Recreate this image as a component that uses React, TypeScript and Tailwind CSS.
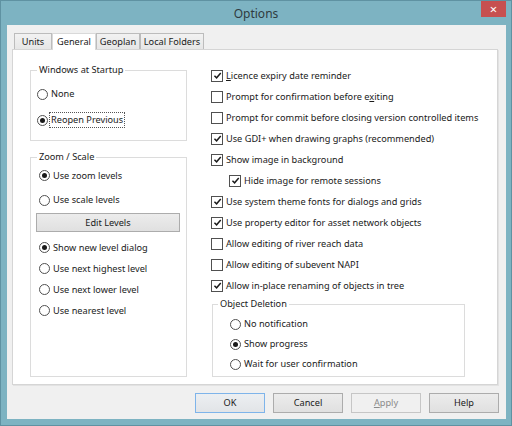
import React from 'react'

function Check({ checked }: { checked?: boolean }) {
  return (
    <span className="w-[12px] h-[12px] border border-[#505050] bg-white flex items-center justify-center shrink-0">
      {checked && (
        <svg viewBox="0 0 10 10" className="w-[9px] h-[9px]">
          <path d="M1.6 5.2 L4 7.6 L8.6 2.2" fill="none" stroke="#1a1a1a" strokeWidth="1.6" />
        </svg>
      )}
    </span>
  )
}

function Radio({ checked }: { checked?: boolean }) {
  return (
    <span className="w-[11px] h-[11px] rounded-full border border-[#505050] bg-white flex items-center justify-center shrink-0">
      {checked && <span className="w-[5px] h-[5px] rounded-full bg-[#1a1a1a]" />}
    </span>
  )
}

function CheckRow({ checked, indent, children }: { checked?: boolean; indent?: boolean; children: React.ReactNode }) {
  return (
    <div className={`h-[21px] flex items-center gap-[3px] ${indent ? 'pl-[18px]' : ''}`}>
      <Check checked={checked} />
      <span className="whitespace-nowrap">{children}</span>
    </div>
  )
}

function RadioRow({ checked, h, focus, children }: { checked?: boolean; h: string; focus?: boolean; children: React.ReactNode }) {
  return (
    <div className={`${h} flex items-center gap-[2px]`}>
      <Radio checked={checked} />
      <span className={`whitespace-nowrap px-[1px] ${focus ? 'outline outline-1 outline-dotted outline-[#555]' : ''}`}>{children}</span>
    </div>
  )
}

export default function App() {
  const tabs = [
    { label: 'Units', w: 'w-[38px]' },
    { label: 'General', w: 'w-[44px]', active: true },
    { label: 'Geoplan', w: 'w-[44px]' },
    { label: 'Local Folders', w: 'w-[64px]' },
  ]

  return (
    <div className="w-[512px] h-[426px] bg-[#7db3c2] border border-[#5f92a2] flex flex-col font-['Noto_Sans',sans-serif] text-[9.2px] text-[#1a1a1a] overflow-hidden">
      {/* Title bar */}
      <div className="h-[24px] flex items-start shrink-0">
        <div className="w-[30px]" />
        <div className="flex-1 text-center text-[12px] text-[#2f3b40] pt-[4px]">Options</div>
        <button className="w-[25px] h-[16px] bg-[#c75050] text-white flex items-center justify-center text-[13px] leading-none mr-[5px]">
          ×
        </button>
      </div>

      {/* Client area */}
      <div className="ml-[6px] mr-[5px] h-[394px] bg-[#f0f0f0] flex flex-col pt-[7px]">
        {/* Tabs */}
        <div className="flex items-end ml-[7px] h-[17px]">
          {tabs.map(t =>
            t.active ? (
              <div
                key={t.label}
                className={`${t.w} h-[17px] bg-white border border-b-0 border-[#d9d9d9] flex items-center justify-center relative z-10 -mb-px pb-[1px]`}
              >
                {t.label}
              </div>
            ) : (
              <div
                key={t.label}
                className={`${t.w} h-[16px] bg-gradient-to-b from-[#f2f2f2] to-[#e6e6e6] border border-b-0 border-[#bcbcbc] flex items-center justify-center`}
              >
                {t.label}
              </div>
            )
          )}
        </div>

        {/* Tab page */}
        <div className="ml-[5px] w-[486px] h-[336px] bg-white border border-[#d5d5d5] shadow-[1px_1px_0_#e2e2e2] flex items-start">
          {/* Left column */}
          <div className="ml-[17px] mt-[13px] w-[157px] flex flex-col">
            <fieldset className="border border-[#dcdcdc] h-[78px] px-[6px]">
              <legend className="px-[2px] leading-[14px]">Windows at Startup</legend>
              <div className="pt-[4px]">
                <RadioRow h="h-[26px]">None</RadioRow>
                <RadioRow h="h-[26px]" checked focus>Reopen Previous</RadioRow>
              </div>
            </fieldset>

            <fieldset className="mt-[9px] border border-[#dcdcdc] h-[227px] px-[5px]">
              <legend className="ml-[1px] px-[2px] leading-[14px]">Zoom / Scale</legend>
              <div className="pl-[3px]">
                <RadioRow h="h-[23px]" checked>Use zoom levels</RadioRow>
                <RadioRow h="h-[26px]">Use scale levels</RadioRow>
              </div>
              <button className="w-[144px] h-[19px] bg-gradient-to-b from-[#ececec] to-[#e0e0e0] border border-[#acacac] flex items-center justify-center">
                Edit Levels
              </button>
              <div className="pl-[3px] mt-[5px]">
                <RadioRow h="h-[21px]" checked>Show new level dialog</RadioRow>
                <RadioRow h="h-[21px]">Use next highest level</RadioRow>
                <RadioRow h="h-[21px]">Use next lower level</RadioRow>
                <RadioRow h="h-[21px]">Use nearest level</RadioRow>
              </div>
            </fieldset>
          </div>

          {/* Right column */}
          <div className="ml-[24px] mt-[15px] flex flex-col">
            <CheckRow checked>
              <span className="underline">L</span>icence expiry date reminder
            </CheckRow>
            <CheckRow>
              Prompt for confirmation before e<span className="underline">x</span>iting
            </CheckRow>
            <CheckRow>Prompt for commit before closing version controlled items</CheckRow>
            <CheckRow checked>Use GDI+ when drawing graphs (recommended)</CheckRow>
            <CheckRow checked>Show image in background</CheckRow>
            <CheckRow checked indent>Hide image for remote sessions</CheckRow>
            <CheckRow checked>Use system theme fonts for dialogs and grids</CheckRow>
            <CheckRow checked>Use property editor for asset network objects</CheckRow>
            <CheckRow>Allow editing of river reach data</CheckRow>
            <CheckRow>Allow editing of subevent NAPI</CheckRow>
            <CheckRow checked>Allow in-place renaming of objects in tree</CheckRow>

            <fieldset className="ml-[1px] mt-[1px] w-[253px] h-[80px] border border-[#dcdcdc] pl-[17px]">
              <legend className="-ml-[12px] px-[2px] leading-[14px]">Object Deletion</legend>
              <div className="pt-[3px]">
                <RadioRow h="h-[20px]">No notification</RadioRow>
                <RadioRow h="h-[20px]" checked>Show progress</RadioRow>
                <RadioRow h="h-[20px]">Wait for user confirmation</RadioRow>
              </div>
            </fieldset>
          </div>
        </div>

        {/* Buttons */}
        <div className="mt-[8px] flex justify-end gap-[8px] pr-[7px]">
          <button className="w-[70px] h-[20px] bg-gradient-to-b from-[#eceff2] to-[#e2e4e7] border border-[#7eb4ea] flex items-center justify-center">
            OK
          </button>
          <button className="w-[70px] h-[20px] bg-gradient-to-b from-[#ececec] to-[#e0e0e0] border border-[#acacac] flex items-center justify-center">
            Cancel
          </button>
          <button className="w-[70px] h-[20px] bg-[#f0f0f0] border border-[#c6c6c6] text-[#8a8a8a] flex items-center justify-center">
            <span className="underline">A</span>pply
          </button>
          <button className="w-[70px] h-[20px] bg-gradient-to-b from-[#ececec] to-[#e0e0e0] border border-[#acacac] flex items-center justify-center">
            Help
          </button>
        </div>
      </div>
    </div>
  )
}
